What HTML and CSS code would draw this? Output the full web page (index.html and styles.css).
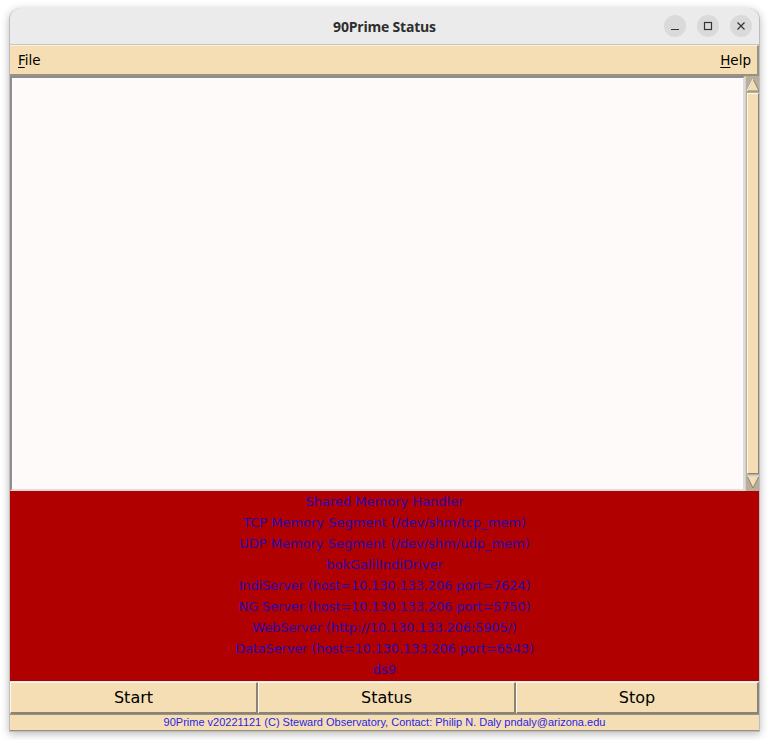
FILE: index.html
```html
<!DOCTYPE html>
<html>
<head>
<meta charset="utf-8">
<link rel="stylesheet" href="styles.css">
</head>
<body>
<div class="window">
  <div class="titlebar">
    <span class="title">90Prime Status</span>
    <div class="controls">
      <span class="ctl"><svg width="10" height="10" viewBox="0 0 10 10"><path d="M1 8.5H9" stroke="#333" stroke-width="1.2"/></svg></span>
      <span class="ctl"><svg width="10" height="10" viewBox="0 0 10 10"><rect x="1.5" y="1.5" width="7" height="7" fill="none" stroke="#333" stroke-width="1.2"/></svg></span>
      <span class="ctl"><svg width="10" height="10" viewBox="0 0 10 10"><path d="M1.5 1.5L8.5 8.5M8.5 1.5L1.5 8.5" stroke="#333" stroke-width="1.2"/></svg></span>
    </div>
  </div>
  <div class="menubar">
    <span class="menu"><u>F</u>ile</span>
    <span class="menu"><u>H</u>elp</span>
  </div>
  <div class="main">
    <div class="textarea"></div>
    <div class="scrollbar">
      <svg class="arrow" width="14" height="14" viewBox="0 0 14 14"><polygon points="7,1 13,13 1,13" fill="#f5deb3" stroke="#8b8378" stroke-width="1"/><path d="M7 1L1 13" stroke="#fff" stroke-width="1"/></svg>
      <div class="slider"></div>
      <svg class="arrow" width="14" height="14" viewBox="0 0 14 14"><polygon points="1,1 13,1 7,13" fill="#f5deb3" stroke="#8b8378" stroke-width="1"/><path d="M1 1H13" stroke="#fff" stroke-width="1"/></svg>
    </div>
  </div>
  <div class="status">
    <div>Shared Memory Handler</div>
    <div>TCP Memory Segment (/dev/shm/tcp_mem)</div>
    <div>UDP Memory Segment (/dev/shm/udp_mem)</div>
    <div>bokGalilIndiDriver</div>
    <div class="tight">IndiServer (host=10.130.133.206 port=7624)</div>
    <div class="tight">NG Server (host=10.130.133.206 port=5750)</div>
    <div class="tight">WebServer (http://10.130.133.206:5905/)</div>
    <div class="tight">DataServer (host=10.130.133.206 port=6543)</div>
    <div>ds9</div>
  </div>
  <div class="buttons">
    <button class="btn">Start</button>
    <button class="btn">Status</button>
    <button class="btn">Stop</button>
  </div>
  <div class="footer">90Prime v20221121 (C) Steward Observatory, Contact: Philip N. Daly pndaly@arizona.edu</div>
</div>
</body>
</html>
```

FILE: styles.css
```css
html, body {
  margin: 0;
  padding: 0;
  background: #ffffff;
}
body {
  width: 770px;
  height: 740px;
  overflow: hidden;
  font-family: "DejaVu Sans", sans-serif;
}
.window {
  margin: 8px 0 0 9px;
  width: 749px;
  border: 1px solid #bdbdbd;
  border-top: none;
  border-radius: 12px 12px 0 0;
  box-shadow: 0 2px 8px rgba(0,0,0,0.28);
  background: #f5deb3;
  overflow: hidden;
}
.titlebar {
  height: 36px;
  background: #ebebeb;
  border-bottom: 1px solid #c4c4c4;
  display: flex;
  align-items: center;
  justify-content: center;
  position: relative;
}
.title {
  font-family: "Open Sans", sans-serif;
  font-weight: 700;
  font-size: 14px;
  color: #2e2e2e;
  letter-spacing: -0.2px;
}
.controls {
  position: absolute;
  right: 7px;
  top: 7px;
  display: flex;
  gap: 11px;
}
.ctl {
  width: 22px;
  height: 22px;
  border-radius: 50%;
  background: #dadada;
  display: flex;
  align-items: center;
  justify-content: center;
}
.menubar {
  height: 28px;
  display: flex;
  justify-content: space-between;
  align-items: center;
  padding: 0 6px 0 8px;
  border-top: 1px solid #fbf2e0;
  border-bottom: 2px solid #9b917f;
  border-right: 2px solid #9b917f;
  font-size: 13.5px;
  color: #000;
}
.menu u {
  text-decoration-thickness: 1px;
  text-underline-offset: 2px;
}
.main {
  display: flex;
  height: 415px;
}
.textarea {
  flex: 1;
  background: #fffafa;
  border-top: 2px solid #8e8e8e;
  border-left: 2px solid #8e8e8e;
  border-right: 2px solid #dcdcdc;
  border-bottom: 2px solid #dcdcdc;
}
.scrollbar {
  width: 14px;
  background: #b9ae9a;
  border-left: 1px solid #d6cfc2;
  display: flex;
  flex-direction: column;
  align-items: center;
  padding: 2px 0;
  box-sizing: border-box;
}
.arrow {
  display: block;
  flex: none;
}
.slider {
  flex: 1;
  width: 12px;
  background: #f5deb3;
  border-top: 1px solid #fff8ea;
  border-left: 1px solid #fff8ea;
  border-right: 1px solid #8b8378;
  border-bottom: 1px solid #8b8378;
  box-sizing: border-box;
  margin: 1px 0;
}
.status {
  background: #b00000;
  height: 190px;
  display: flex;
  flex-direction: column;
  align-items: center;
  font-size: 13px;
  color: #2a06b0;
}
.status div {
  height: 21px;
  line-height: 21px;
}
.status .tight {
  letter-spacing: -0.15px;
}
.buttons {
  display: grid;
  grid-template-columns: 248px 258px 1fr;
  height: 32px;
  background: #f5deb3;
  border-top: 1px solid #e8e8e8;
}
.btn {
  font-family: "DejaVu Sans", sans-serif;
  font-size: 16px;
  color: #000;
  background: #f5deb3;
  margin: 0;
  padding: 0;
  border-top: 1px solid #fffaf0;
  border-left: 1px solid #fffaf0;
  border-right: 2px solid #8b8378;
  border-bottom: 2px solid #8b8378;
}
.footer {
  height: 15px;
  line-height: 15px;
  text-align: center;
  font-family: "Liberation Sans", sans-serif;
  font-size: 11px;
  color: #2a1ee6;
  border-top: 1px solid #9b917f;
  border-bottom: 1px solid #9b917f;
  background: #f5deb3;
}
```
